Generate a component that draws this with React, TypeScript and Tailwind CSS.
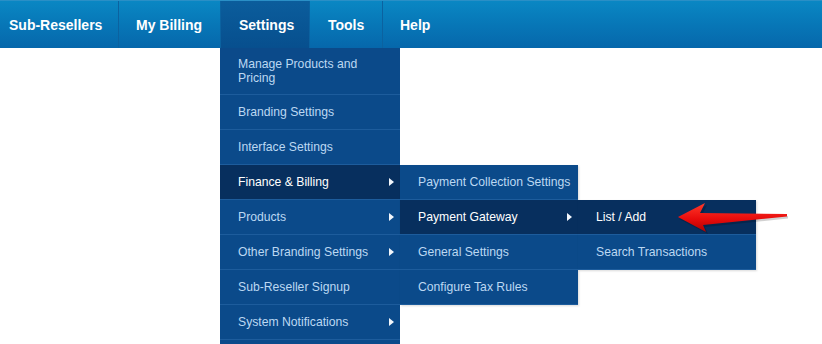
import type { ReactNode } from "react";

type Item = { label: ReactNode; active?: boolean; arrow?: boolean; twoLine?: boolean; children?: ReactNode };

const Caret = () => (
  <svg width="5" height="8" viewBox="0 0 5 8" className="absolute right-[6px] top-1/2 -translate-y-1/2">
    <path d="M0 0 L5 4 L0 8 Z" fill="#f2f6fb" />
  </svg>
);

const MenuRow = ({ label, active, arrow, twoLine, children }: Item) => (
  <li
    className={`relative border-b border-[#1d5c9c] pl-[18px] pr-2 leading-[14px] ${
      twoLine ? "pt-[9px] pb-[9px]" : "whitespace-nowrap py-[10px]"
    } ${active ? "bg-[#072f5e] text-white" : "text-[#bcd8f2]"}`}
  >
    {label}
    {arrow && <Caret />}
    {children}
  </li>
);

const SubMenu = ({ children }: { children: ReactNode }) => (
  <ul className="absolute left-full top-0 w-[178px] bg-[#0b4a8a] text-[12.2px] shadow-[1px_1px_2px_rgba(0,0,0,0.15)]">{children}</ul>
);

const navItems = [
  { label: "Sub-Resellers", w: "w-[119px]", pl: "pl-[9px]" },
  { label: "My Billing", w: "w-[102px]", pl: "pl-[17px]" },
  { label: "Settings", w: "w-[89px]", pl: "pl-[18px]", active: true },
  { label: "Tools", w: "w-[73px]", pl: "pl-[18px]" },
  { label: "Help", w: "w-[80px]", pl: "pl-[17px]", last: true },
];

export default function App() {
  return (
    <main className="relative h-[344px] w-[822px] overflow-hidden bg-white font-['Liberation_Sans',Arial,sans-serif]">
      <nav className="flex h-[48px] border-t border-[#2a8fc6] bg-gradient-to-b from-[#0a87c3] to-[#0667ab]">
        {navItems.map((n) => (
          <div
            key={n.label}
            className={`relative flex h-full items-center pt-[1px] ${n.w} ${n.pl} ${n.last ? "" : "border-r border-[#0b62a0]"} text-[14px] font-bold text-white ${
              n.active ? "bg-gradient-to-b from-[#0b5d9c] to-[#074f8e]" : ""
            }`}
          >
            {n.label}
            {n.active && (
              <ul className="absolute left-[-1px] top-full w-[180px] bg-[#0b4a8a] text-[12.2px] font-normal">
                <MenuRow label={<>Manage Products and<br />Pricing</>} twoLine />
                <MenuRow label="Branding Settings" />
                <MenuRow label="Interface Settings" />
                <MenuRow label="Finance & Billing" active arrow>
                  <SubMenu>
                    <MenuRow label="Payment Collection Settings" />
                    <MenuRow label="Payment Gateway" active arrow>
                      <SubMenu>
                        <MenuRow label="List / Add" active />
                        <MenuRow label="Search Transactions" />
                      </SubMenu>
                    </MenuRow>
                    <MenuRow label="General Settings" />
                    <MenuRow label="Configure Tax Rules" />
                  </SubMenu>
                </MenuRow>
                <MenuRow label="Products" arrow />
                <MenuRow label="Other Branding Settings" arrow />
                <MenuRow label="Sub-Reseller Signup" />
                <MenuRow label="System Notifications" arrow />
                <li className="h-[34px]" />
              </ul>
            )}
          </div>
        ))}
      </nav>

      {/* red pointer arrow */}
      <svg className="absolute left-[676px] top-[200px]" width="116" height="36" viewBox="0 0 116 36">
        <defs>
          <linearGradient id="redArrow" x1="0" y1="0" x2="0" y2="1">
            <stop offset="0" stopColor="#ff3a2a" />
            <stop offset="0.55" stopColor="#e80c0c" />
            <stop offset="1" stopColor="#b00000" />
          </linearGradient>
        </defs>
        <path d="M3 19 L31 5 L26 15 L112 16 L112 18.5 L29 27 L32 34 Z" fill="rgba(0,0,0,0.18)" />
        <path d="M2 17 L29 3 L24 13 L111 14 L111 16.5 L27 25 L30 32 Z" fill="url(#redArrow)" />
      </svg>
    </main>
  );
}
